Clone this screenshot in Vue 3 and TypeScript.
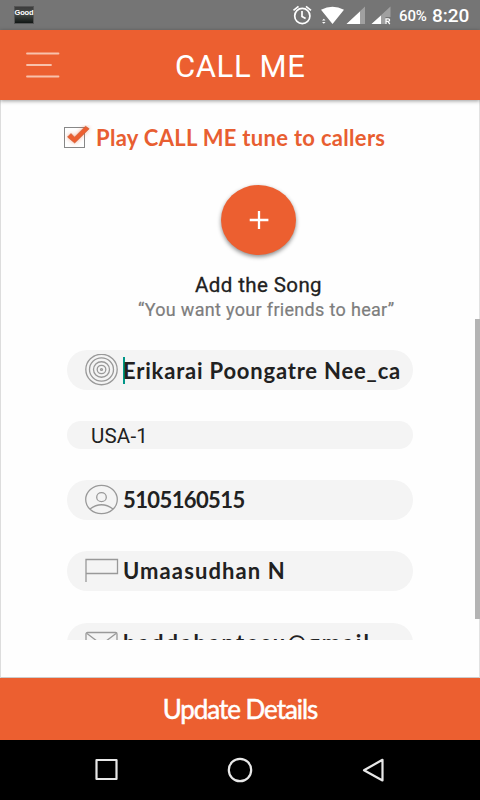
<script setup lang="ts">
import { ref } from 'vue'

type IconName = 'rings' | 'person' | 'flag' | 'mail' | 'none'
interface Field { icon: IconName; value: string; kind: string }

const tuneEnabled = ref(true)
const fields = ref<Field[]>([
  { icon: 'rings', value: 'Erikarai Poongatre Nee_ca', kind: 'song' },
  { icon: 'none', value: 'USA-1', kind: 'country' },
  { icon: 'person', value: '5105160515', kind: 'phone' },
  { icon: 'flag', value: 'Umaasudhan N', kind: 'name' },
  { icon: 'mail', value: 'baddabantosu@gmail', kind: 'mail' },
])
const rings = [1, 4.3, 8, 12, 15.7]
</script>

<template>
  <div class="screen">
    <div class="status">
      <span class="good">Good</span>
      <svg class="status-icons" width="104" height="30" viewBox="0 0 104 30">
        <g fill="none" stroke="#fff" stroke-width="1.7">
          <circle cx="10.3" cy="16" r="7.6" />
          <path d="M10 11v5.5l3.6 2M1.5 10.3l5-4M14 6.300l5 4" />
        </g>
        <path fill="#fff" d="M29 9.800Q40.500 3.500 52 9.800L40.500 24ZM30 20.500l1.800-1.800 1.700 1.800ZM30 22l1.800 1.800 1.700-1.800Z" />
        <path fill="#a0a0a0" d="M73 6.500V24H54.500ZM98.500 6.500V17h-5v7H79.500Z" />
        <path fill="#fff" d="M68 11.500V24H54.500ZM89 15.500V24h-9.500Z" />
        <path d="M94 24v-5.200h2.300a1.200 1.200 0 0 1 0 2.600h-2.300M96 21.600l1.800 2.400" fill="none" stroke="#fff" stroke-width="1.300" />
      </svg>
      <span class="battery">60%</span>
      <span class="clock">8:20</span>
    </div>

    <header class="bar">
      <svg class="menu" width="34" height="28" viewBox="0 0 34 28">
        <path d="M1 2.500h31.500M1 14h24M1 25.500h31.500" stroke="#f8c1ab" stroke-width="1.800" stroke-linecap="round" />
      </svg>
      <h1 class="title">CALL ME</h1>
    </header>

    <main class="body">
      <div class="scroll">
        <label class="tune" @click="tuneEnabled = !tuneEnabled">
          <svg class="check" width="30" height="26" viewBox="0 0 30 26">
            <rect x="1.500" y="2.500" width="20" height="20" fill="#fff" stroke="#888" />
            <g v-if="tuneEnabled" class="tick">
              <path d="M4.500 12L8 8.500l3.500 3.700L22.500 1.200l3.700 2.600L11.700 18Z" fill="#ec5f30" stroke="#c65a35" stroke-width=".6" />
            </g>
          </svg>
          <span class="tune-text">Play CALL ME tune to callers</span>
        </label>
        <button class="add" type="button">
          <svg width="20" height="20" viewBox="0 0 20 20"><path d="M10 .9v18M.7 10h18.700" stroke="#fff" stroke-width="2.300" /></svg>
        </button>
        <div class="add-title">Add the Song</div>
        <div class="add-sub">“You want your friends to hear”</div>

        <div class="fields">
          <div v-for="f in fields" :key="f.kind" class="field" :class="f.kind">
            <svg v-if="f.icon !== 'none'" class="icon" width="34" height="32" viewBox="0 0 34 32">
              <g fill="none" stroke="#999" stroke-width="1.300">
                <template v-if="f.icon === 'rings'">
                  <ellipse v-for="r in rings" :key="r" cx="16.500" cy="15.500" :rx="r" :ry="r * 0.97" />
                </template>
                <template v-else-if="f.icon === 'person'">
                  <ellipse cx="16.500" cy="15.500" rx="15.800" ry="14.200" />
                  <ellipse cx="16.500" cy="13.200" rx="4.800" ry="4.500" />
                  <path d="M5 25q11.500-8.500 23 0" />
                </template>
                <path v-else-if="f.icon === 'flag'" d="M1 27V4.500h31.500V18.500H1" />
                <g v-else>
                  <rect x="1" y="5.500" width="31" height="23" rx="1.500" />
                  <path d="M2 6.500l14.500 11L31 6.500" />
                </g>
              </g>
            </svg>
            <i v-if="f.kind === 'song'" class="caret"></i>
            <span class="value">{{ f.value }}</span>
          </div>
        </div>
      </div>
      <div class="thumb"></div>
    </main>

    <button class="update" type="button">Update Details</button>

    <nav class="nav">
      <svg width="24" height="24" viewBox="0 0 24 24"><rect x="2.500" y="2" width="20" height="19" /></svg>
      <svg width="26" height="26" viewBox="0 0 26 26"><circle cx="13" cy="13" r="11.200" /></svg>
      <svg width="24" height="26" viewBox="0 0 24 26"><path d="M21.500 2.800V23.500L3 13.200Z" /></svg>
    </nav>
  </div>
</template>

<style>
body { margin: 0; background: #fff; }
</style>

<style scoped>
* { box-sizing: border-box; }
button { border: 0; padding: 0; }
.screen { width: 480px; height: 800px; display: flex; flex-direction: column; overflow: hidden; background: #fefefe; font-family: Roboto, sans-serif; }
.status { height: 30px; flex: none; background: #757575; color: #fff; display: flex; align-items: center; padding: 0 11px 0 14px; white-space: nowrap; }
.good { width: 20px; height: 18px; margin-right: auto; background: linear-gradient(#3c3c3c, #464b48 45%, #111614); border: 1px solid #555; color: #fff; font: bold 7.500px/11px "Liberation Sans", sans-serif; display: flex; justify-content: center; letter-spacing: -.1px; }
.status-icons { margin-right: 3px; }
.battery { width: 29px; font-size: 15px; font-weight: 500; letter-spacing: -.1px; margin-right: 4px; padding-top: 1px; }
.clock { width: 37px; font-size: 19px; font-weight: 500; }
.bar { height: 70px; flex: none; background: #ec5f30; display: flex; align-items: center; position: relative; z-index: 1; box-shadow: 0 1px 4px rgba(0, 0, 0, .4); padding-left: 26px; }
.menu { margin-right: 115px; }
.title { margin: 3px 0 0; font-size: 31px; line-height: 36px; font-weight: 400; color: #fff; white-space: nowrap; letter-spacing: .6px; }
.body { height: 578px; flex: none; display: flex; border-left: 1px solid #ddd; border-right: 1px solid #e2e2e2; border-bottom: 1px solid #ccc; }
.scroll { height: 540px; flex: 1; overflow: hidden; padding: 24px 0 0 62px; }
.thumb { width: 5px; height: 300px; margin: 219px -1px 0 0; background: #b4b4b4; }
.tune { display: flex; height: 28px; align-items: center; color: #e85e31; font: 700 22px/28px Lato, sans-serif; white-space: nowrap; }
.tick { filter: drop-shadow(0 0 2px rgba(236, 95, 48, .5)); }
.tune-text { margin-left: 3px; letter-spacing: .3px; }
.add { display: flex; align-items: center; justify-content: center; width: 75px; height: 70px; margin: 33px 0 0 158px; border-radius: 50%; background: #ec5f30; box-shadow: 0 2px 4px rgba(0, 0, 0, .45); }
.add-title { margin: 18px 0 0 132px; font-size: 20.500px; line-height: 25px; font-weight: 400; color: #212121; -webkit-text-stroke: .3px #212121; letter-spacing: .4px; white-space: nowrap; }
.add-sub { margin: 0 0 0 75px; font-size: 18px; line-height: 24px; color: #7d7d7d; letter-spacing: .32px; -webkit-text-stroke: .2px #7d7d7d; white-space: nowrap; }
.fields { width: 346px; margin: 29px 0 0 4px; }
.field { height: 40px; margin-bottom: 31px; padding-left: 18px; border-radius: 20px; background: #f4f4f4; display: flex; align-items: center; overflow: hidden; color: #212121; font: 700 22px/32px Lato, sans-serif; white-space: nowrap; }
.icon { flex: none; }
.value { margin-left: 4px; letter-spacing: .84px; }
.song { margin-top: -1px; }
.song .value { letter-spacing: .8px; margin-top: 1px; }
.phone .value { letter-spacing: -.6px; }
.name .value { letter-spacing: 1.100px; }
.mail { margin-top: 32px; }
.mail .value { letter-spacing: 2.150px; }
.caret { width: 2px; height: 27px; margin: 0 -6px 0 4px; background: #009688; flex: none; }
.country { height: 28px; padding-left: 20px; font: 400 20.500px/28px Roboto, sans-serif; }
.country .value { letter-spacing: .2px; margin-top: 1px; }
.update { height: 62px; flex: none; background: #ec5f30; color: #fff; font: 400 26px/62px Lato, sans-serif; letter-spacing: -1.050px; -webkit-text-stroke: .5px #fff; }
.nav { height: 60px; flex: none; background: #000; display: flex; align-items: center; justify-content: space-between; padding: 0 95px 0 94px; }
.nav svg { fill: none; stroke: #e8e8e8; stroke-width: 2.200; stroke-linejoin: round; }
</style>
